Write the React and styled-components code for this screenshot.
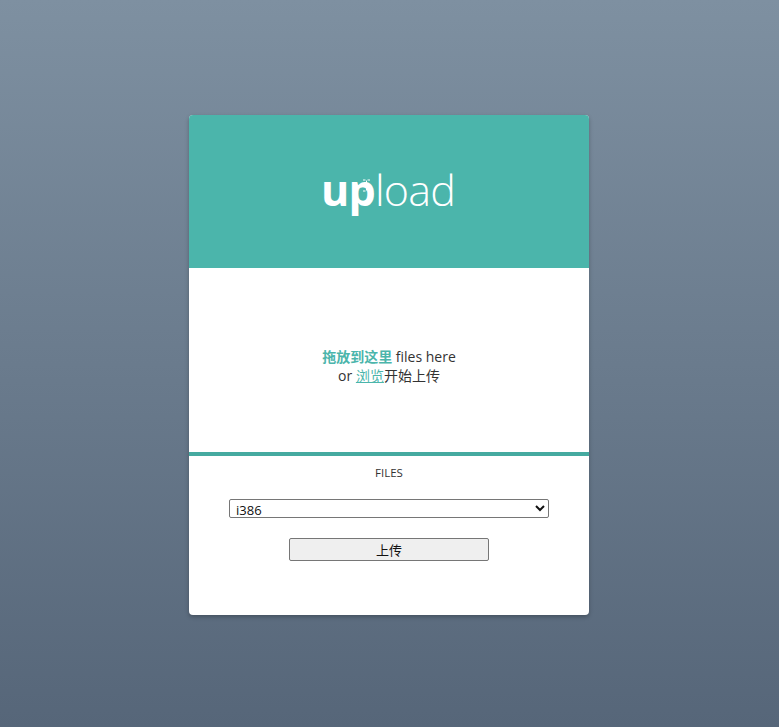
import React from "react";
import styled, { createGlobalStyle } from "styled-components";

const Global = createGlobalStyle`
  html, body { margin: 0; padding: 0; height: 100%; }
  body {
    background: linear-gradient(to bottom, #7e90a1 0%, #566679 100%);
    font-family: "Open Sans", "Noto Sans", "Noto Sans CJK SC", sans-serif;
    min-height: 727px;
  }
`;

const Page = styled.div`
  display: flex;
  justify-content: center;
  padding-top: 115px;
  padding-right: 1px;
  min-height: 727px;
  box-sizing: border-box;
`;

const Card = styled.div`
  width: 400px;
  height: 500px;
  background: #fff;
  border-radius: 4px;
  overflow: hidden;
  box-shadow: 0 2px 4px rgba(0, 0, 0, 0.25);
  display: flex;
  flex-direction: column;
`;

const Header = styled.div`
  height: 153px;
  flex-shrink: 0;
  background: #4bb5ab;
  display: flex;
  align-items: center;
  justify-content: center;
`;

const Logo = styled.div`
  position: relative;
  color: #fff;
  font-size: 43px;
  line-height: 1;
  font-family: "Open Sans", "Noto Sans", sans-serif;
  letter-spacing: -0.8px;
  margin-top: -4px;
  margin-left: -2px;
`;

const Bold = styled.span`
  font-weight: 700;
`;

const Light = styled.span`
  font-weight: 300;
`;

const Cursor = styled.svg`
  position: absolute;
  left: 41px;
  top: 11px;
`;

const Drop = styled.div`
  height: 172px;
  flex-shrink: 0;
  padding-top: 12px;
  border-bottom: 4px solid #45aaa0;
  display: flex;
  flex-direction: column;
  align-items: center;
  justify-content: center;
  font-size: 14px;
  line-height: 19px;
  color: #333;
`;

const Strong = styled.strong`
  color: #4bb5ab;
  font-weight: 700;
`;

const Link = styled.a`
  color: #4bb5ab;
  text-decoration: underline;
`;

const Files = styled.div`
  display: flex;
  flex-direction: column;
  align-items: center;
  padding-top: 9px;
`;

const Label = styled.div`
  font-size: 11.5px;
  color: #333;
  line-height: 16px;
`;

const Select = styled.select`
  margin-top: 18px;
  width: 320px;
  height: 19px;
  font-size: 13px;
  font-family: "Open Sans", "Noto Sans", sans-serif;
  border: 1px solid #767676;
  border-radius: 2px;
  background: #fff;
  color: #111;
  padding: 0 2px;
`;

const Button = styled.button`
  margin-top: 20px;
  width: 200px;
  height: 23px;
  background: #efefef;
  border: 1px solid #767676;
  border-radius: 2px;
  font-size: 13px;
  color: #111;
  font-family: "Noto Sans CJK SC", sans-serif;
  padding: 0;
`;

export default function App() {
  return (
    <>
      <Global />
      <Page>
        <Card>
          <Header>
            <Logo>
              <Bold>up</Bold>
              <Light>load</Light>
              <Cursor width="9" height="13" viewBox="0 0 9 13">
                <path d="M1 1h2.5M5.5 1H8M4.5 1.5v10M1 12h2.5M5.5 12H8" stroke="#fff" strokeWidth="1" fill="none" />
              </Cursor>
            </Logo>
          </Header>
          <Drop>
            <div>
              <Strong>拖放到这里</Strong> files here
            </div>
            <div>
              or <Link href="#">浏览</Link>开始上传
            </div>
          </Drop>
          <Files>
            <Label>FILES</Label>
            <Select defaultValue="i386">
              <option value="i386">i386</option>
            </Select>
            <Button>上传</Button>
          </Files>
        </Card>
      </Page>
    </>
  );
}
